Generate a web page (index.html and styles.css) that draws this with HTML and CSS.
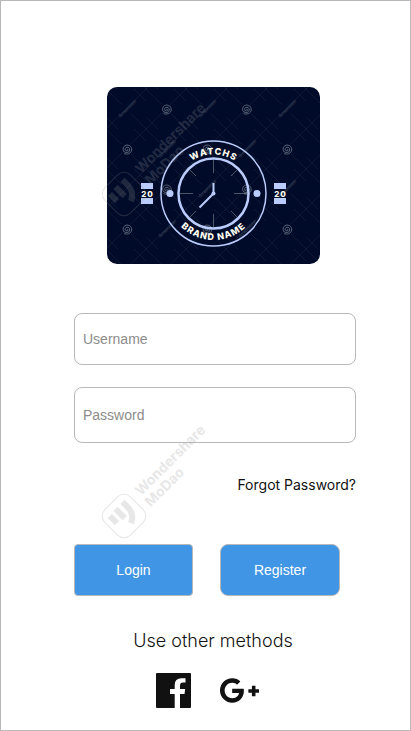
FILE: index.html
```html
<!DOCTYPE html>
<html lang="en">
<head>
<meta charset="utf-8">
<meta name="viewport" content="width=device-width, initial-scale=1">
<title>Login</title>
<link rel="stylesheet" href="styles.css">
</head>
<body>
<main class="screen">
  <svg class="brand" viewBox="0 0 213 177" role="img" aria-label="Watchs brand name">
    <defs>
      <pattern id="lattice" width="40" height="40" patternUnits="userSpaceOnUse" patternTransform="translate(19 22)">
        <path class="lattice" d="M0 40L40 0M5 5L35 35M-6 6L6 -6M34 46L46 34M8 20L20 32M20 8L32 20"/>
      </pattern>
      <g id="spiral">
        <path class="spiral" d="M0 0C1 -1 2 1 0 1.500C-2 1.500 -2.500 -1 -1 -2C1 -3 3 -1.500 2.800 .5C2.500 3 -.5 3.800 -2.500 2.500C-5 .5 -4 -3.500 -1 -4.300C2 -5 5 -3 4.700 .5C4.300 4 0 5.500 -3 4"/>
      </g>
      <path id="arc-top" d="M67.500 106.500A39 39 0 0 1 145.500 106.500"/>
      <path id="arc-bottom" d="M60 106.500A46.500 46.500 0 0 0 153 106.500"/>
    </defs>
    <rect class="brand-bg" width="213" height="177"/>
    <rect width="213" height="177" fill="url(#lattice)"/>
    <use href="#spiral" x="59.500" y="22.500"/>
    <use href="#spiral" x="139.500" y="22.500"/>
    <use href="#spiral" x="20" y="62.500"/>
    <use href="#spiral" x="100" y="62.500"/>
    <use href="#spiral" x="180" y="62.500"/>
    <use href="#spiral" x="59.500" y="102.500"/>
    <use href="#spiral" x="139.500" y="102.500"/>
    <use href="#spiral" x="20" y="142.500"/>
    <use href="#spiral" x="100" y="142.500"/>
    <use href="#spiral" x="180" y="142.500"/>
    <g class="stamp">
      <text transform="translate(13 31) rotate(-45)">dreamstime</text>
      <text transform="translate(93 31) rotate(-45)">dreamstime</text>
      <text transform="translate(173 31) rotate(-45)">dreamstime</text>
      <text transform="translate(53 71) rotate(-45)">dreamstime</text>
      <text transform="translate(133 71) rotate(-45)">dreamstime</text>
      <text transform="translate(93 111) rotate(-45)">dreamstime</text>
      <text transform="translate(173 111) rotate(-45)">dreamstime</text>
      <text transform="translate(53 151) rotate(-45)">dreamstime</text>
      <text transform="translate(133 151) rotate(-45)">dreamstime</text>
    </g>
    <circle class="ring-outer" cx="106.500" cy="106.500" r="52.500"/>
    <circle class="ring-inner" cx="106.500" cy="106.500" r="35"/>
    <path class="ticks" d="M106.500 73v13M106.500 127v13M73 106.500h13M127 106.500h13M83 83l6 6M124 124l6 6M130 83l-6 6M89 124l-6 6"/>
    <path class="hands" d="M106.500 96v10.500L92.500 120.500"/>
    <circle class="accent" cx="106.500" cy="106.500" r="2"/>
    <circle class="accent" cx="63" cy="106.500" r="3.500"/>
    <circle class="accent" cx="150" cy="106.500" r="3.500"/>
    <path class="accent" d="M34 96h12v6H34zM34 111h12v6H34zM167 96h12v6h-12zM167 111h12v6h-12z"/>
    <g class="brand-text">
      <text class="brand-year" x="40.500" y="109.500">20</text>
      <text class="brand-year" x="173.500" y="109.500">20</text>
      <text><textPath href="#arc-top" startOffset="50%">WATCHS</textPath></text>
      <text><textPath href="#arc-bottom" startOffset="50%">BRAND NAME</textPath></text>
    </g>
  </svg>

  <form class="login">
    <input class="field" type="text" placeholder="Username" aria-label="Username">
    <input class="field field-password" type="password" placeholder="Password" aria-label="Password">
    <a class="forgot" href="#">Forgot Password?</a>
    <div class="actions">
      <button class="button" type="submit">Login</button>
      <button class="button button-register" type="button">Register</button>
    </div>
  </form>

  <h2 class="other">Use other methods</h2>
  <nav class="social" aria-label="Other methods">
    <a href="#" aria-label="Facebook">
      <svg class="icon-facebook" viewBox="0 0 35 35"><path fill-rule="evenodd" d="M1 0H34Q35 0 35 1V34Q35 35 34 35H24V21H28.500L29.200 16H24V12.500Q24 9.500 27 9.500H29.500V5.200H25.500Q18.700 5.200 18.700 12V16H14V21H18.700V35H1Q0 35 0 34V1Q0 0 1 0Z"/></svg>
    </a>
    <a href="#" aria-label="Google Plus">
      <svg class="icon-google" viewBox="12.800 64 614.400 384"><path d="M386.061 228.496c1.834 9.692 3.143 19.384 3.143 31.956C389.204 370.205 315.599 448 204.800 448c-106.084 0-192-85.915-192-192s85.916-192 192-192c51.864 0 95.083 18.859 128.611 50.292l-52.126 50.030c-14.145-13.621-39.028-29.599-76.485-29.599-65.484 0-118.920 54.221-118.920 121.277 0 67.056 53.436 121.277 118.920 121.277 75.961 0 104.513-54.745 108.965-82.773H204.800v-66.009h181.261zm185.406 6.437V179.200h-56.001v55.733h-55.733v56.001h55.733v55.733h56.001v-55.733H627.200v-56.001h-55.733z"/></svg>
    </a>
  </nav>

  <svg class="watermark watermark-top" viewBox="-30 -110 140 140" aria-hidden="true">
    <g id="mark" transform="rotate(-45)">
      <rect class="mark-frame" x="-18" y="-18" width="36" height="36" rx="9"/>
      <path class="mark-fill" d="M-13 -10h6v10h-6zM-4 -11h6v13h-6z"/>
      <path class="mark-curve" d="M9 -11V-4Q9 6 0 10"/>
      <text class="mark-text" x="26" y="-2">Wondershare</text>
      <text class="mark-text" x="25" y="13">MoDao</text>
    </g>
  </svg>
  <svg class="watermark watermark-bottom" viewBox="-30 -110 140 140" aria-hidden="true">
    <use href="#mark"/>
  </svg>
</main>
</body>
</html>
```
FILE: styles.css
```css
* {
  box-sizing: border-box;
}

body {
  margin: 0;
  background: #fff;
  color: #111;
  font-family: "Liberation Sans", Arial, sans-serif;
}

.screen {
  position: relative;
  display: flex;
  flex-direction: column;
  min-height: 100vh;
  padding: 86px 54px 20px 73px;
  border: 1px solid #b8b8b8;
}

.brand {
  display: block;
  margin: 0 36px 49px 33px;
  border-radius: 10px;
}

.brand-bg {
  fill: #000b29;
}

.lattice {
  fill: none;
  stroke: #1c2740;
  stroke-width: 0.500;
}

.spiral {
  fill: none;
  stroke: #5a6275;
  stroke-width: 1;
}

.stamp {
  fill: #4a5468;
  font-family: "Liberation Serif", serif;
  font-size: 5px;
}

.ring-outer,
.ring-inner,
.hands {
  fill: none;
  stroke: #b9ccfb;
}

.ring-outer {
  stroke-width: 1.500;
}

.ring-inner {
  stroke-width: 2.500;
}

.hands {
  stroke-width: 2;
}

.ticks {
  stroke: #7b8b8e;
  stroke-width: 0.600;
}

.accent {
  fill: #b9ccfb;
}

.brand-text {
  fill: #fffdf0;
  font-family: Inter, sans-serif;
  font-size: 9px;
  font-weight: 800;
  letter-spacing: 1px;
  text-anchor: middle;
}

.brand-year {
  font-size: 8px;
}

.login {
  display: flex;
  flex-direction: column;
}

.field {
  width: 100%;
  height: 52px;
  margin: 0 0 22px;
  padding: 0 8px;
  border: 1px solid #b8b8b8;
  border-radius: 8px;
  background: #fff;
  color: #111;
  font: 14px "Liberation Sans", Arial, sans-serif;
}

.field::placeholder {
  color: #8c8c8c;
  opacity: 1;
}

.field-password {
  height: 56px;
  margin-bottom: 32px;
}

.forgot {
  align-self: flex-end;
  color: #111;
  font: 14px/20px Inter, sans-serif;
  text-decoration: none;
}

.actions {
  display: grid;
  grid-template-columns: 119fr 120fr;
  gap: 27px;
  margin: 49px 16px 0 0;
}

.button {
  height: 52px;
  padding: 0;
  border: 1px solid #b8b8b8;
  border-radius: 4px;
  background: #4095e5;
  color: #fff;
  font: 14px "Liberation Sans", Arial, sans-serif;
}

.button-register {
  border-radius: 8px;
}

.other {
  margin: 32px 4px 20px 0;
  font: 300 18px/25px Inter, sans-serif;
  text-align: center;
}

.social {
  display: flex;
  justify-content: center;
  align-items: center;
  gap: 29px;
  margin-right: 16px;
}

.social a {
  display: flex;
  color: #111;
}

.social svg {
  fill: currentColor;
}

.icon-facebook {
  width: 35px;
  height: 35px;
}

.icon-google {
  width: 39px;
  height: 25px;
}

.watermark {
  position: absolute;
  left: 93px;
  width: 140px;
  height: 140px;
  opacity: 0.220;
  pointer-events: none;
}

.watermark-top {
  top: 83px;
}

.watermark-bottom {
  top: 405px;
}

.mark-frame {
  fill: none;
  stroke: #969696;
  stroke-width: 1;
}

.mark-fill,
.mark-text {
  fill: #969696;
}

.mark-curve {
  fill: none;
  stroke: #969696;
  stroke-width: 6;
}

.mark-text {
  font-family: Inter, sans-serif;
  font-size: 14px;
  font-weight: 700;
}
```
